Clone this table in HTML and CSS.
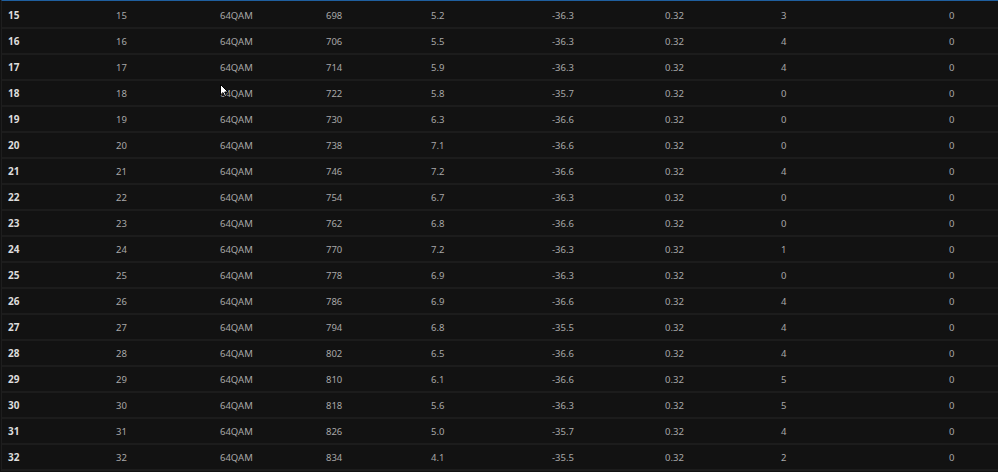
FILE: index.html
```html
<!DOCTYPE html>
<html>
<head>
<meta charset="utf-8">
<link rel="stylesheet" href="styles.css">
</head>
<body>
<div class="grid">
  <div class="row"><span class="c id">15</span><span class="c">15</span><span class="c">64QAM</span><span class="c">698</span><span class="c">5.2</span><span class="c">-36.3</span><span class="c">0.32</span><span class="c">3</span><span class="c">0</span></div>
  <div class="row"><span class="c id">16</span><span class="c">16</span><span class="c">64QAM</span><span class="c">706</span><span class="c">5.5</span><span class="c">-36.3</span><span class="c">0.32</span><span class="c">4</span><span class="c">0</span></div>
  <div class="row"><span class="c id">17</span><span class="c">17</span><span class="c">64QAM</span><span class="c">714</span><span class="c">5.9</span><span class="c">-36.3</span><span class="c">0.32</span><span class="c">4</span><span class="c">0</span></div>
  <div class="row"><span class="c id">18</span><span class="c">18</span><span class="c">64QAM</span><span class="c">722</span><span class="c">5.8</span><span class="c">-35.7</span><span class="c">0.32</span><span class="c">0</span><span class="c">0</span></div>
  <div class="row"><span class="c id">19</span><span class="c">19</span><span class="c">64QAM</span><span class="c">730</span><span class="c">6.3</span><span class="c">-36.6</span><span class="c">0.32</span><span class="c">0</span><span class="c">0</span></div>
  <div class="row"><span class="c id">20</span><span class="c">20</span><span class="c">64QAM</span><span class="c">738</span><span class="c">7.1</span><span class="c">-36.6</span><span class="c">0.32</span><span class="c">0</span><span class="c">0</span></div>
  <div class="row"><span class="c id">21</span><span class="c">21</span><span class="c">64QAM</span><span class="c">746</span><span class="c">7.2</span><span class="c">-36.6</span><span class="c">0.32</span><span class="c">4</span><span class="c">0</span></div>
  <div class="row"><span class="c id">22</span><span class="c">22</span><span class="c">64QAM</span><span class="c">754</span><span class="c">6.7</span><span class="c">-36.3</span><span class="c">0.32</span><span class="c">0</span><span class="c">0</span></div>
  <div class="row"><span class="c id">23</span><span class="c">23</span><span class="c">64QAM</span><span class="c">762</span><span class="c">6.8</span><span class="c">-36.6</span><span class="c">0.32</span><span class="c">0</span><span class="c">0</span></div>
  <div class="row"><span class="c id">24</span><span class="c">24</span><span class="c">64QAM</span><span class="c">770</span><span class="c">7.2</span><span class="c">-36.3</span><span class="c">0.32</span><span class="c">1</span><span class="c">0</span></div>
  <div class="row"><span class="c id">25</span><span class="c">25</span><span class="c">64QAM</span><span class="c">778</span><span class="c">6.9</span><span class="c">-36.3</span><span class="c">0.32</span><span class="c">0</span><span class="c">0</span></div>
  <div class="row"><span class="c id">26</span><span class="c">26</span><span class="c">64QAM</span><span class="c">786</span><span class="c">6.9</span><span class="c">-36.6</span><span class="c">0.32</span><span class="c">4</span><span class="c">0</span></div>
  <div class="row"><span class="c id">27</span><span class="c">27</span><span class="c">64QAM</span><span class="c">794</span><span class="c">6.8</span><span class="c">-35.5</span><span class="c">0.32</span><span class="c">4</span><span class="c">0</span></div>
  <div class="row"><span class="c id">28</span><span class="c">28</span><span class="c">64QAM</span><span class="c">802</span><span class="c">6.5</span><span class="c">-36.6</span><span class="c">0.32</span><span class="c">4</span><span class="c">0</span></div>
  <div class="row"><span class="c id">29</span><span class="c">29</span><span class="c">64QAM</span><span class="c">810</span><span class="c">6.1</span><span class="c">-36.6</span><span class="c">0.32</span><span class="c">5</span><span class="c">0</span></div>
  <div class="row"><span class="c id">30</span><span class="c">30</span><span class="c">64QAM</span><span class="c">818</span><span class="c">5.6</span><span class="c">-36.3</span><span class="c">0.32</span><span class="c">5</span><span class="c">0</span></div>
  <div class="row"><span class="c id">31</span><span class="c">31</span><span class="c">64QAM</span><span class="c">826</span><span class="c">5.0</span><span class="c">-35.7</span><span class="c">0.32</span><span class="c">4</span><span class="c">0</span></div>
  <div class="row"><span class="c id">32</span><span class="c">32</span><span class="c">64QAM</span><span class="c">834</span><span class="c">4.1</span><span class="c">-35.5</span><span class="c">0.32</span><span class="c">2</span><span class="c">0</span></div>
</div>
<svg class="cursor" width="10" height="14" viewBox="0 0 10 14"><path d="M0.5 0.5 L0.5 11 L3 8.6 L4.8 12.5 L6.4 11.8 L4.7 8 L8 8 Z" fill="#ffffff" stroke="#000000" stroke-width="1"/></svg>
</body>
</html>
```
FILE: styles.css
```css
html, body {
  margin: 0;
  padding: 0;
  background: #121212;
  height: 100%;
  overflow: hidden;
}
body {
  font-family: "Noto Sans", "Open Sans", sans-serif;
  font-size: 9.5px;
  color: #a8a8a8;
  position: relative;
}
.grid {
  border-top: 1px solid #1f5f9f;
  border-left: 1px solid #1e1e1e;
  margin-left: 1px;
  padding-top: 2px;
}
.row {
  display: grid;
  grid-template-columns: 108px 104px 106px 105px 121px 113px 116px 168px 1fr;
  height: 24px;
  align-items: center;
  border-bottom: 2px solid #1c1c1c;
}
.c {
  padding-left: 6px;
  white-space: nowrap;
}
.id {
  font-weight: bold;
  font-size: 10px;
  color: #dcdcdc;
}
.cursor {
  position: absolute;
  left: 220px;
  top: 84px;
}
```
